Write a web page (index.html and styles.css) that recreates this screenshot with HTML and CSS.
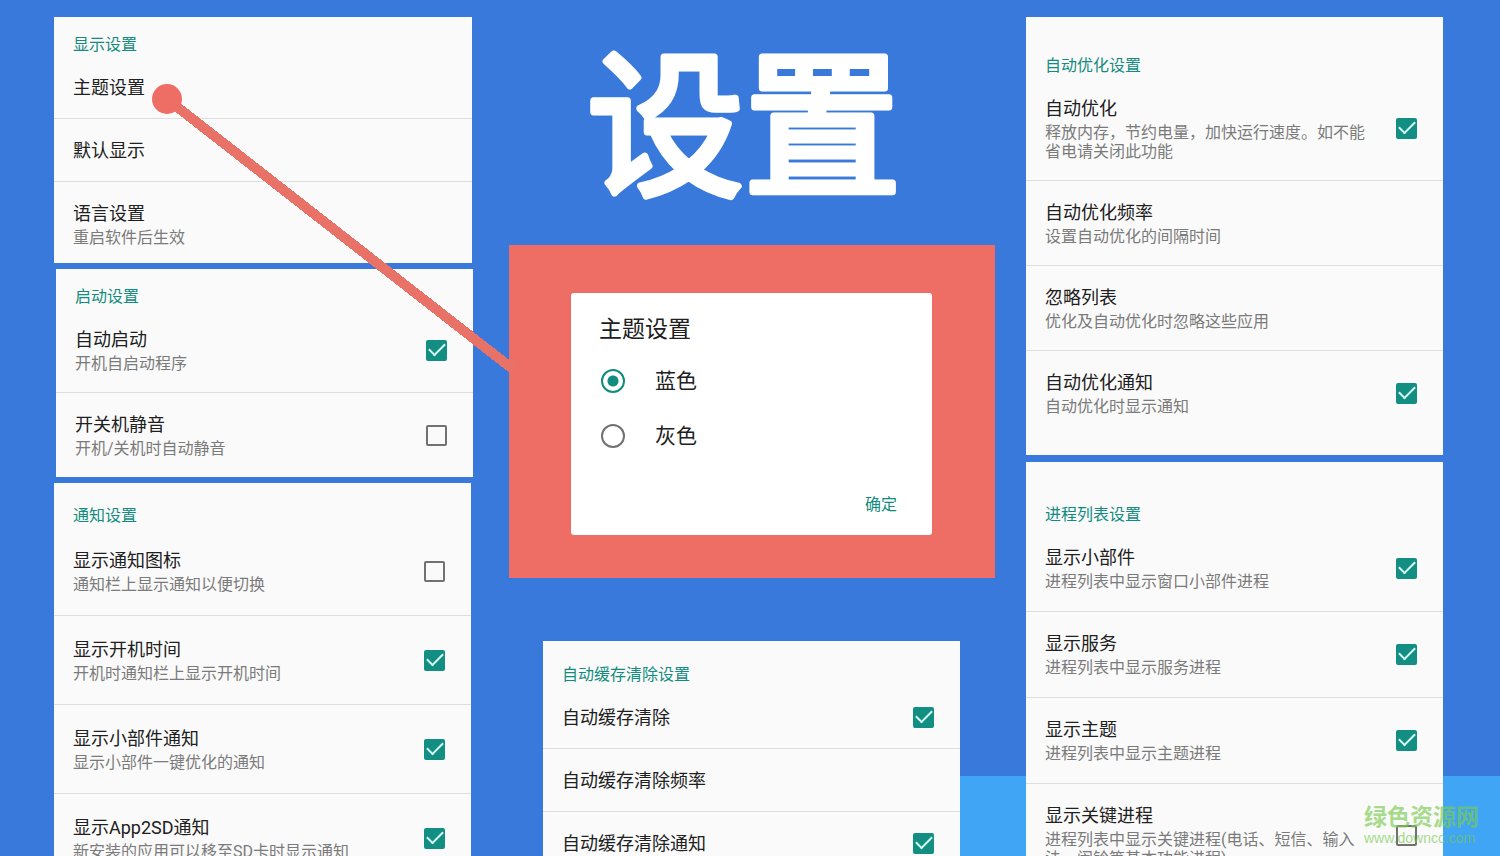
FILE: index.html
```html
<!DOCTYPE html>
<html lang="zh-CN">
<head>
  <meta charset="UTF-8" />
  <meta name="viewport" content="width=device-width, initial-scale=1" />
  <title>设置</title>
  <link rel="stylesheet" href="styles.css">
</head>
<body>
  <main class="page">
    <div class="column">
      <section class="card card-display">
        <h2>显示设置</h2>
        <a class="row" href="#"><span class="text"><span class="name">主题设置</span></span></a>
        <a class="row" href="#"><span class="text"><span class="name">默认显示</span></span></a>
        <a class="row" href="#"><span class="text"><span class="name">语言设置</span><span class="note">重启软件后生效</span></span></a>
      </section>
      <section class="card card-boot">
        <h2>启动设置</h2>
        <label class="row">
          <span class="text"><span class="name">自动启动</span><span class="note">开机自启动程序</span></span>
          <input type="checkbox" checked>
        </label>
        <label class="row">
          <span class="text"><span class="name">开关机静音</span><span class="note">开机/关机时自动静音</span></span>
          <input type="checkbox">
        </label>
      </section>
      <section class="card card-notice">
        <h2>通知设置</h2>
        <label class="row">
          <span class="text"><span class="name">显示通知图标</span><span class="note">通知栏上显示通知以便切换</span></span>
          <input type="checkbox">
        </label>
        <label class="row">
          <span class="text"><span class="name">显示开机时间</span><span class="note">开机时通知栏上显示开机时间</span></span>
          <input type="checkbox" checked>
        </label>
        <label class="row">
          <span class="text"><span class="name">显示小部件通知</span><span class="note">显示小部件一键优化的通知</span></span>
          <input type="checkbox" checked>
        </label>
        <label class="row">
          <span class="text"><span class="name">显示App2SD通知</span><span class="note">新安装的应用可以移至SD卡时显示通知</span></span>
          <input type="checkbox" checked>
        </label>
      </section>
    </div>

    <div class="column column-center">
      <h1>
        <svg width="100%" height="228">
          <text x="50%" y="166" text-anchor="middle">设置</text>
        </svg>
      </h1>
      <div class="panel">
        <form class="dialog">
          <h3>主题设置</h3>
          <label class="option"><input type="radio" name="theme" checked>蓝色</label>
          <label class="option"><input type="radio" name="theme">灰色</label>
          <button type="button">确定</button>
        </form>
      </div>
      <section class="card card-cache">
        <h2>自动缓存清除设置</h2>
        <label class="row">
          <span class="text"><span class="name">自动缓存清除</span></span>
          <input type="checkbox" checked>
        </label>
        <a class="row" href="#"><span class="text"><span class="name">自动缓存清除频率</span></span></a>
        <label class="row">
          <span class="text"><span class="name">自动缓存清除通知</span></span>
          <input type="checkbox" checked>
        </label>
      </section>
    </div>

    <div class="column column-right">
      <section class="card card-optimize">
        <h2>自动优化设置</h2>
        <label class="row">
          <span class="text"><span class="name">自动优化</span><span class="note">释放内存，节约电量，加快运行速度。如不能省电请关闭此功能</span></span>
          <input type="checkbox" checked>
        </label>
        <a class="row" href="#"><span class="text"><span class="name">自动优化频率</span><span class="note">设置自动优化的间隔时间</span></span></a>
        <a class="row" href="#"><span class="text"><span class="name">忽略列表</span><span class="note">优化及自动优化时忽略这些应用</span></span></a>
        <label class="row">
          <span class="text"><span class="name">自动优化通知</span><span class="note">自动优化时显示通知</span></span>
          <input type="checkbox" checked>
        </label>
      </section>
      <section class="card card-process">
        <h2>进程列表设置</h2>
        <label class="row">
          <span class="text"><span class="name">显示小部件</span><span class="note">进程列表中显示窗口小部件进程</span></span>
          <input type="checkbox" checked>
        </label>
        <label class="row">
          <span class="text"><span class="name">显示服务</span><span class="note">进程列表中显示服务进程</span></span>
          <input type="checkbox" checked>
        </label>
        <label class="row">
          <span class="text"><span class="name">显示主题</span><span class="note">进程列表中显示主题进程</span></span>
          <input type="checkbox" checked>
        </label>
        <label class="row">
          <span class="text"><span class="name">显示关键进程</span><span class="note">进程列表中显示关键进程(电话、短信、输入法、闹铃等基本功能进程)</span></span>
          <input type="checkbox">
        </label>
      </section>
    </div>

    <!-- pointer from the theme row to the dialog -->
    <svg class="pointer" width="520" height="380" viewBox="0 0 520 380" aria-hidden="true">
      <line x1="167" y1="99" x2="514" y2="370" stroke="#e87168" stroke-width="10" shape-rendering="crispEdges" />
      <circle cx="167" cy="99" r="15" fill="#ee6e66" />
    </svg>

    <div class="watermark">
      <strong>绿色资源网</strong>
      <span>www.downcc.com</span>
    </div>
  </main>
</body>
</html>
```
FILE: styles.css
```css
* {
  box-sizing: border-box;
}
body {
  margin: 0;
  font-family: Roboto, "Noto Sans CJK SC", sans-serif;
  color: #202020;
}
.page {
  position: relative;
  display: grid;
  grid-template-columns: 418fr 492fr 417fr;
  column-gap: 31px;
  height: 100vh;
  padding: 17px 57px 0 54px;
  overflow: hidden;
  background: linear-gradient(#3fa5f4, #3fa5f4) right bottom / 45% 80px no-repeat #3879db;
}
.column {
  display: flex;
  flex-direction: column;
  gap: 6px;
  min-width: 0;
}
.column-center {
  gap: 0;
  padding-left: 6px;
}
.column-right {
  gap: 7px;
}
h1, h2, h3 {
  margin: 0;
}

/* cards */
.card {
  flex-shrink: 0;
  background: #fafafa;
}
.card h2 {
  padding: 2px 19px 0;
  font-size: 16px;
  line-height: 22px;
  font-weight: 400;
  color: #128c7e;
}
.row {
  display: flex;
  align-items: center;
  gap: 27px;
  padding: 20px 26px 18px 19px;
  border-bottom: 1px solid #dcdfe0;
  color: inherit;
  text-decoration: none;
}
.row:last-child {
  border-bottom: none;
}
.text {
  flex: 1;
  min-width: 0;
}
.name, .note {
  display: block;
}
.name {
  font-size: 18px;
  line-height: 24px;
}
.note {
  margin: 2px 0 1px;
  font-size: 16px;
  line-height: 19px;
  color: #7b7b7b;
}
.card-display {
  padding-top: 15px;
}
.card-display .row:last-child {
  padding-bottom: 15px;
}
.card-boot {
  margin-left: 2px;
  margin-right: -1px;
  padding-top: 15px;
}
.card-notice {
  margin-right: 1px;
  padding-top: 20px;
}
.card-notice .row {
  padding-top: 22px;
  padding-bottom: 20px;
}
.card-cache {
  margin: 63px 35px 0 34px;
  padding-top: 21px;
}
.card-optimize {
  padding: 36px 0 20px;
}
.card-process {
  padding-top: 40px;
}
.card-process .row {
  padding-bottom: 19px;
}

/* tick boxes and radios */
input {
  appearance: none;
  flex: none;
  margin: 0;
  border: 2px solid #717171;
}
input[type="checkbox"] {
  position: relative;
  width: 21px;
  height: 21px;
  margin-bottom: 2px;
  border-radius: 2px;
}
input[type="checkbox"]:checked {
  border-color: #128f82;
  background: #128f82;
}
input[type="checkbox"]:checked::after {
  content: "";
  position: absolute;
  left: 1px;
  top: 1px;
  width: 14px;
  height: 7px;
  border-left: 2px solid #d8fff8;
  border-bottom: 2px solid #d8fff8;
  transform: rotate(-45deg);
}
input[type="radio"] {
  width: 24px;
  height: 24px;
  margin-top: 4px;
  border-radius: 50%;
}
input[type="radio"]:checked {
  border-color: #128c7e;
  background: radial-gradient(circle, #128c7e 5px, #fff 6px);
}

/* centre column */
h1 {
  padding-right: 16px;
  font-size: 157px;
  font-weight: 400;
}
h1 svg {
  display: block;
  fill: #fff;
  stroke: #fff;
  stroke-width: 7px;
  stroke-linejoin: round;
}
.panel {
  padding: 48px 63px 43px 62px;
  background: #ee6e66;
}
.dialog {
  display: flex;
  flex-direction: column;
  padding: 20px 28px 14px;
  border-radius: 3px;
  background: #fff;
}
.dialog h3 {
  font-size: 23px;
  line-height: 34px;
  font-weight: 400;
}
.option {
  display: flex;
  align-items: center;
  gap: 30px;
  height: 55px;
  padding-left: 2px;
  font-size: 21px;
}
.option:first-of-type {
  margin-top: 4px;
}
.dialog button {
  align-self: flex-end;
  margin-top: 28px;
  padding: 0 7px;
  border: none;
  background: none;
  font: inherit;
  font-size: 16px;
  line-height: 32px;
  color: #128c7e;
}

/* overlays */
.pointer {
  position: absolute;
  left: 0;
  top: 0;
  pointer-events: none;
}
.watermark {
  position: absolute;
  right: 21px;
  bottom: 10px;
  display: flex;
  flex-direction: column;
  color: #7bcb52;
  opacity: 0.65;
  pointer-events: none;
}
.watermark strong {
  font-size: 23px;
  line-height: 24px;
}
.watermark span {
  font-family: "Liberation Sans", Arial, sans-serif;
  font-size: 14px;
  line-height: 16px;
}
```
